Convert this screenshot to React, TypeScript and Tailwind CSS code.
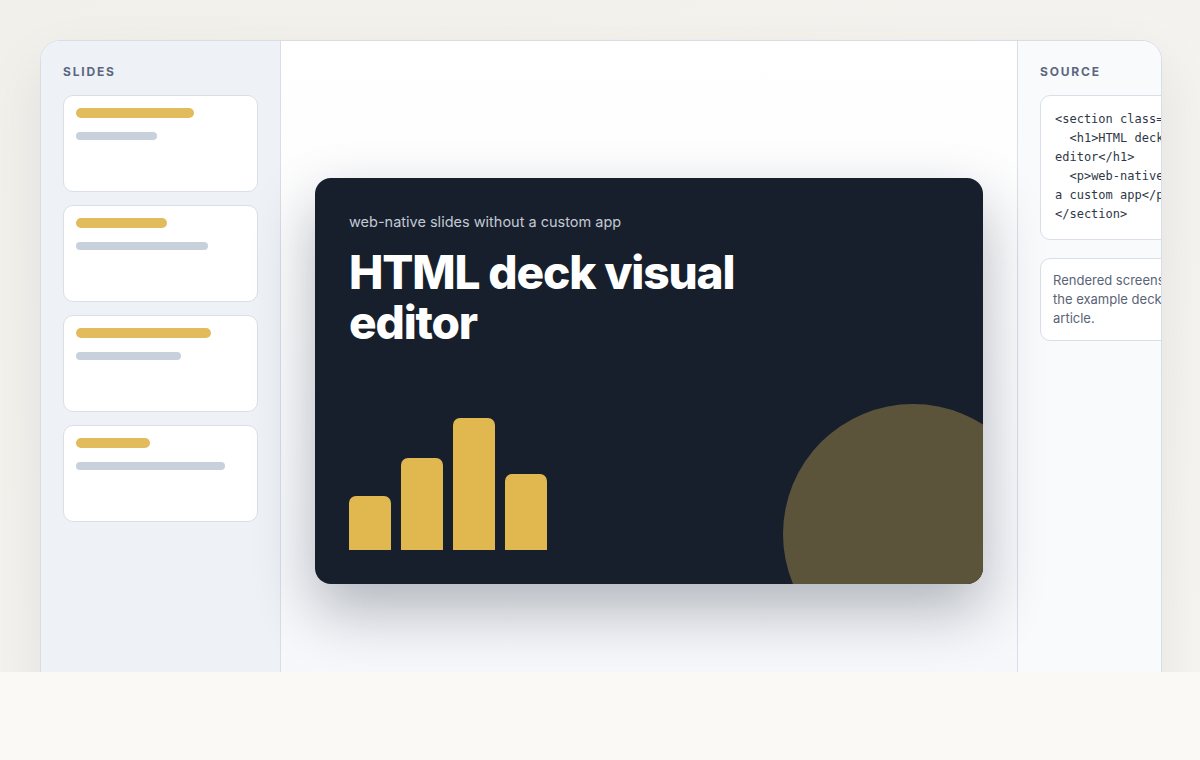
import React from "react";

const slides = [
  { gold: 118, gray: 81 },
  { gold: 91, gray: 132 },
  { gold: 135, gray: 105 },
  { gold: 74, gray: 149 },
];

const bars = [54, 92, 132, 76];

export default function App() {
  return (
    <div
      className="min-h-[760px] w-full bg-[#faf9f5]"
      style={{ fontFamily: "Inter, 'Noto Sans', 'Liberation Sans', sans-serif" }}
    >
      <div className="h-[672px] overflow-hidden bg-gradient-to-br from-[#f1f0eb] to-[#f6f5f1] pl-10 pr-[38px] pt-10">
        <div className="flex h-[682px] overflow-hidden rounded-[20px] border border-[#d9dde8] bg-white shadow-[0_24px_60px_rgba(15,23,42,0.08)]">
          {/* Sidebar */}
          <aside className="w-[240px] shrink-0 border-r border-[#d9dde8] bg-[#eef2f7] px-[22px] pt-[23px]">
            <div className="mb-[15px] text-[12px] font-bold uppercase leading-4 tracking-[0.15em] text-[#5b6780]">
              Slides
            </div>
            <div className="flex flex-col gap-[13px]">
              {slides.map((s, i) => (
                <div
                  key={i}
                  className="flex h-[97px] flex-col gap-[14px] rounded-[10px] border border-[#d9dee8] bg-white px-3 pt-3"
                >
                  <div className="h-[10px] rounded-full bg-[#e2bc5c]" style={{ width: s.gold }} />
                  <div className="h-[8px] rounded-full bg-[#c8d0dc]" style={{ width: s.gray }} />
                </div>
              ))}
            </div>
          </aside>

          {/* Canvas */}
          <main className="flex w-[737px] shrink-0 items-center justify-center border-r border-[#d9dde8] bg-gradient-to-b from-white to-[#f5f7fa]">
            <div className="relative flex h-[406px] w-[668px] flex-col overflow-hidden rounded-2xl bg-[#171f2c] p-[34px] shadow-[0_26px_60px_rgba(15,23,42,0.30)]">
              <div className="text-[14.5px] leading-5 text-[#c3c9d4]">web-native slides without a custom app</div>
              <h1 className="mt-[15px] max-w-[420px] text-[46px] font-extrabold leading-[50px] tracking-[-0.025em] text-white">
                HTML deck visual editor
              </h1>
              <div
                className="absolute h-[260px] w-[260px] rounded-full bg-[#5c543a]"
                style={{ left: 468, top: 226 }}
              />
              <div className="relative mt-auto flex items-end gap-[10px]">
                {bars.map((h, i) => (
                  <div key={i} className="w-[42px] rounded-t-[7px] bg-[#e0b84f]" style={{ height: h }} />
                ))}
              </div>
            </div>
          </main>

          {/* Source */}
          <section className="min-w-0 flex-1 overflow-hidden bg-[#f9fafc]">
            <div className="w-[300px] px-[22px] pt-[23px]">
              <div className="mb-[15px] text-[12px] font-bold uppercase leading-4 tracking-[0.15em] text-[#5b6780]">
                Source
              </div>
              <div
                className="whitespace-pre-wrap rounded-[10px] border border-[#d9dee8] bg-white px-[14px] pb-[15px] pt-[14px] text-[12px] leading-[19px] text-[#2f3747]"
                style={{ fontFamily: "'DejaVu Sans Mono', 'Liberation Mono', monospace" }}
              >
                {`<section class="slide hero">\n  <h1>HTML deck visual editor</h1>\n  <p>web-native slides without a custom app</p>\n</section>`}
              </div>
              <div className="mt-[18px] rounded-[10px] border border-[#d9dee8] bg-white p-3 text-[13px] leading-[19px] text-[#5a6477]">
                Rendered screenshot of a slide from
                <br />
                the example deck used in this
                <br />
                article.
              </div>
            </div>
          </section>
        </div>
      </div>
    </div>
  );
}
